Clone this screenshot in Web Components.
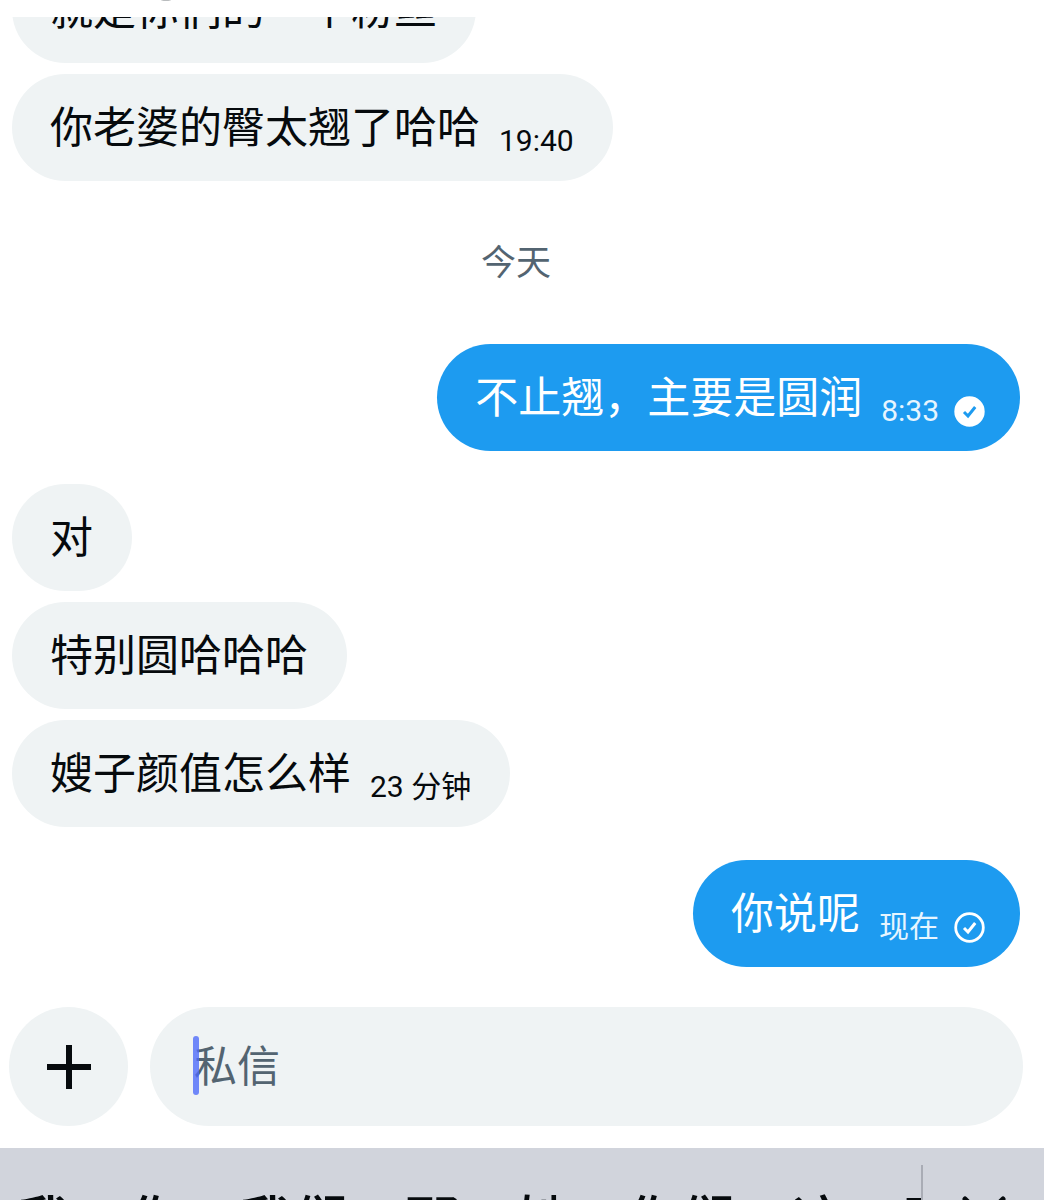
<!DOCTYPE html>
<html lang="zh-CN">
<head>
<meta charset="UTF-8">
<meta name="viewport" content="width=device-width, initial-scale=1">
<title>私信</title>
<style>
  body {
    margin: 0;
    background: #fff;
    color: #060a0d;
    font-family: Roboto, "Noto Sans CJK SC", sans-serif;
  }
</style>
</head>
<body>
<chat-screen>
  <chat-bubble>就是你们的一个粉丝</chat-bubble>
  <chat-bubble time="19:40">你老婆的臀太翘了哈哈</chat-bubble>
  <chat-day>今天</chat-day>
  <chat-bubble sent status="seen" time="8:33">不止翘，主要是圆润</chat-bubble>
  <chat-bubble class="turn">对</chat-bubble>
  <chat-bubble>特别圆哈哈哈</chat-bubble>
  <chat-bubble time="23 分钟">嫂子颜值怎么样</chat-bubble>
  <chat-bubble class="turn" sent status="delivered" time="现在">你说呢</chat-bubble>
  <chat-composer slot="composer" placeholder="私信"></chat-composer>
  <word-suggestions slot="keyboard" words="我 你 我们 那 她 你们 这 不"></word-suggestions>
</chat-screen>

<script>
class ChatScreen extends HTMLElement {
  constructor() {
    super();
    this.attachShadow({ mode: "open" }).innerHTML = `
      <style>
        :host {
          display: flex;
          flex-direction: column;
          height: 100vh;
          overflow: hidden;
        }
        header {
          flex: none;
          height: 17px;
          padding-left: 160px;
          overflow: hidden;
        }
        header svg {
          display: block;
        }
        main {
          flex: 1;
          min-height: 0;
          display: flex;
          flex-direction: column;
          justify-content: flex-end;
          gap: 11px;
          padding: 0 24px 40px 12px;
          overflow: hidden;
        }
        ::slotted(.turn) {
          margin-top: 22px;
        }
      </style>
      <header>
        <svg width="12" height="2" viewBox="0 0 12 2" aria-hidden="true"><ellipse cx="6" cy="-1" rx="6" ry="2" fill="#b9bcbe"/></svg>
      </header>
      <main><slot></slot></main>
      <slot name="composer"></slot>
      <slot name="keyboard"></slot>
    `;
  }
}

class ChatBubble extends HTMLElement {
  constructor() {
    super();
    this.attachShadow({ mode: "open" });
  }

  connectedCallback() {
    const time = this.getAttribute("time");
    this.shadowRoot.innerHTML = `
      <style>
        :host {
          display: flex;
          flex: none;
          align-self: flex-start;
          box-sizing: border-box;
          max-width: 85%;
          padding: 25px 39px 23px 38px;
          border-radius: 54px;
          background: #eff3f4;
          font-size: 43px;
          line-height: 59px;
        }
        :host([sent]) {
          align-self: flex-end;
          padding-right: 35px;
          background: #1d9bf0;
          color: #fff;
        }
        .meta {
          display: flex;
          flex: none;
          align-self: flex-end;
          align-items: center;
          gap: 15px;
          margin-left: 19px;
          font-size: 30px;
          line-height: 34px;
        }
        :host([sent]) time {
          color: #e6f5ff;
        }
      </style>
      <span><slot></slot></span>
      ${time ? `<span class="meta"><time>${time}</time>${this.statusIcon()}</span>` : ""}
    `;
  }

  // filled disc = seen, outlined = delivered
  statusIcon() {
    const status = this.getAttribute("status");
    if (!status) return "";
    const seen = status === "seen";
    return `
      <svg width="31" height="31" viewBox="0 0 31 31" fill="none" role="img" aria-label="${seen ? "已读" : "已发送"}">
        <circle cx="15.5" cy="15.5" r="13.8" stroke="#fff" stroke-width="2.8" ${seen ? 'fill="#fff"' : ""}/>
        <path d="M10 16l4 4 7.2-9" stroke="${seen ? "#1d9bf0" : "#fff"}" stroke-width="3"/>
      </svg>`;
  }
}

class ChatDay extends HTMLElement {
  constructor() {
    super();
    this.attachShadow({ mode: "open" }).innerHTML = `
      <style>
        :host {
          display: block;
          flex: none;
          padding: 47px 0 45px;
          color: #536471;
          font-size: 35px;
          line-height: 49px;
          text-align: center;
        }
      </style>
      <slot></slot>
    `;
  }
}

class ChatComposer extends HTMLElement {
  constructor() {
    super();
    this.attachShadow({ mode: "open" });
  }

  connectedCallback() {
    const label = this.getAttribute("placeholder");
    this.shadowRoot.innerHTML = `
      <style>
        :host {
          display: flex;
          flex: none;
          gap: 22px;
          padding: 0 21px 22px 9px;
        }
        button {
          display: grid;
          place-items: center;
          flex: none;
          width: 119px;
          height: 119px;
          padding: 0;
          border: 0;
          border-radius: 50%;
          background: #eff3f4;
          color: #060a0d;
        }
        .field {
          position: relative;
          flex: 1;
          min-width: 0;
        }
        input {
          box-sizing: border-box;
          width: 100%;
          height: 119px;
          padding: 0 44px;
          border: 0;
          border-radius: 60px;
          outline: 0;
          background: #eff3f4;
          color: inherit;
          font: inherit;
          font-size: 43px;
        }
        input::placeholder {
          color: #536471;
          opacity: 1;
        }
        .caret {
          position: absolute;
          left: 43px;
          top: 29px;
          width: 6px;
          height: 59px;
          border-radius: 3px;
          background: #4a68fa;
          opacity: 0.78;
          pointer-events: none;
        }
      </style>
      <button type="button" aria-label="添加">
        <svg width="44" height="44" viewBox="0 0 44 44"><path d="M22 0v44M0 22h44" stroke="currentColor" stroke-width="6"/></svg>
      </button>
      <div class="field">
        <input type="text" aria-label="${label}" placeholder="${label}">
        <span class="caret"></span>
      </div>
    `;
  }
}

class WordSuggestions extends HTMLElement {
  constructor() {
    super();
    this.attachShadow({ mode: "open" });
  }

  connectedCallback() {
    const words = this.getAttribute("words").split(" ");
    this.shadowRoot.innerHTML = `
      <style>
        :host {
          display: flex;
          flex: none;
          height: 52px;
          overflow: hidden;
          background: #d1d4dc;
        }
        .words {
          display: flex;
          flex: 1;
          gap: 57px;
          min-width: 0;
          height: 102px;
          padding: 48px 0 0 18px;
          box-sizing: border-box;
          overflow: hidden;
        }
        button {
          flex: none;
          padding: 0;
          border: 0;
          background: none;
          color: #060a0d;
          font: inherit;
          font-size: 54px;
          font-weight: 500;
          line-height: 54px;
        }
        .more {
          display: flex;
          justify-content: center;
          width: 123px;
          height: 80px;
          margin-top: 17px;
          padding-top: 30px;
          border-left: 2px solid #a9acb5;
        }
      </style>
      <div class="words">
        ${words.map((word) => `<button type="button">${word}</button>`).join("")}
      </div>
      <button class="more" type="button" aria-label="展开">
        <svg width="46" height="28" viewBox="0 0 46 28" fill="none"><path d="M4 4l19 19L42 4" stroke="currentColor" stroke-width="5" stroke-linecap="round"/></svg>
      </button>
    `;
  }
}

customElements.define("chat-screen", ChatScreen);
customElements.define("chat-bubble", ChatBubble);
customElements.define("chat-day", ChatDay);
customElements.define("chat-composer", ChatComposer);
customElements.define("word-suggestions", WordSuggestions);
</script>
</body>
</html>
